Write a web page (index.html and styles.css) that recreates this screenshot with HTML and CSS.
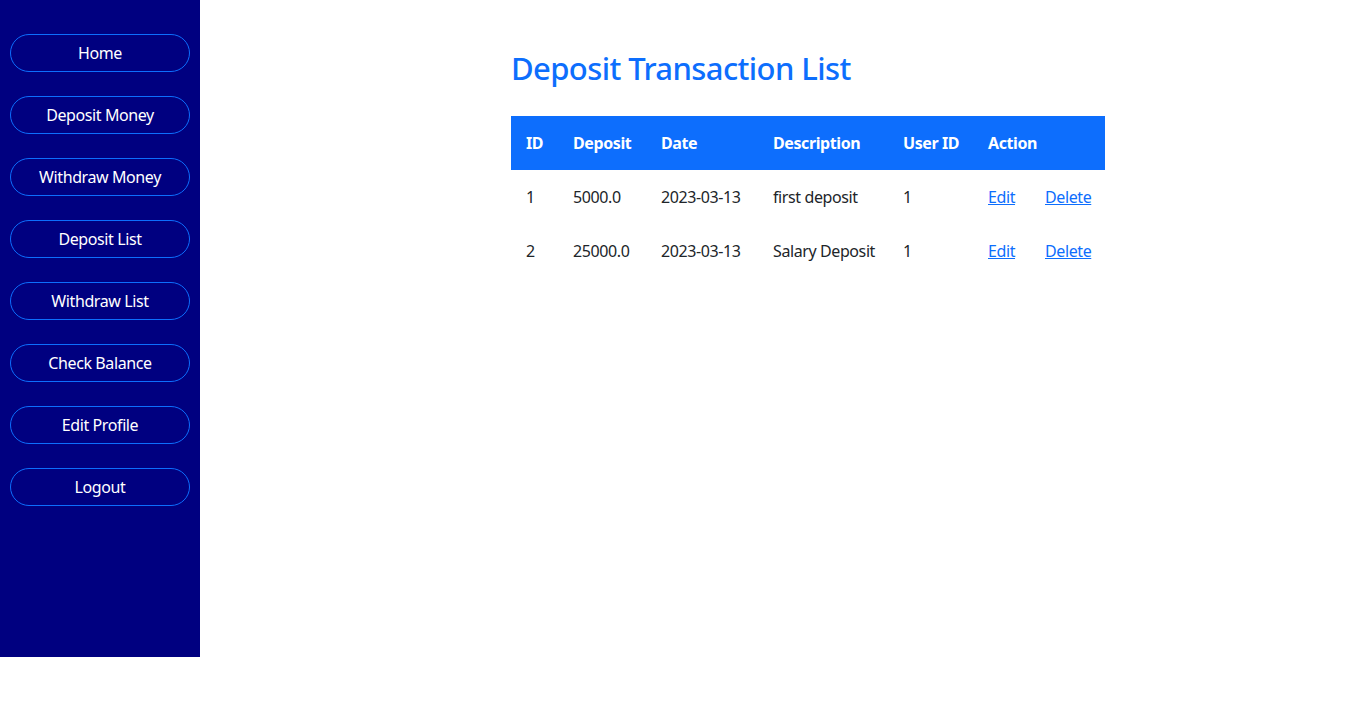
FILE: index.html
```html
<!DOCTYPE html>
<html lang="en">
<head>
<meta charset="utf-8">
<title>Deposit Transaction List</title>
<link rel="stylesheet" href="styles.css">
</head>
<body>
<div class="layout">
  <nav class="sidebar">
    <a class="nav-btn" href="#">Home</a>
    <a class="nav-btn" href="#">Deposit Money</a>
    <a class="nav-btn" href="#">Withdraw Money</a>
    <a class="nav-btn" href="#">Deposit List</a>
    <a class="nav-btn" href="#">Withdraw List</a>
    <a class="nav-btn" href="#">Check Balance</a>
    <a class="nav-btn" href="#">Edit Profile</a>
    <a class="nav-btn" href="#">Logout</a>
  </nav>
  <main class="main">
    <h2 class="title">Deposit Transaction List</h2>
    <table class="tx-table">
      <colgroup>
        <col class="c-id"><col class="c-dep"><col class="c-date"><col class="c-desc"><col class="c-user"><col class="c-edit"><col class="c-del">
      </colgroup>
      <thead>
        <tr><th>ID</th><th>Deposit</th><th>Date</th><th>Description</th><th>User ID</th><th colspan="2">Action</th></tr>
      </thead>
      <tbody>
        <tr><td>1</td><td>5000.0</td><td>2023-03-13</td><td>first deposit</td><td>1</td><td><a href="#">Edit</a></td><td><a href="#">Delete</a></td></tr>
        <tr><td>2</td><td>25000.0</td><td>2023-03-13</td><td>Salary Deposit</td><td>1</td><td><a href="#">Edit</a></td><td><a href="#">Delete</a></td></tr>
      </tbody>
    </table>
  </main>
</div>
</body>
</html>
```

FILE: styles.css
```css
* { box-sizing: border-box; }
html, body { margin: 0; padding: 0; }
body {
  font-family: "Noto Sans", "Open Sans", sans-serif;
  font-size: 16px;
  line-height: 1.5;
  letter-spacing: -0.4px;
  color: #212529;
  background: #fff;
}
.layout { display: flex; align-items: flex-start; }
.sidebar {
  width: 200px;
  height: 657px;
  flex: none;
  background: #000080;
  display: flex;
  flex-direction: column;
  gap: 24px;
  padding: 34px 10px 0;
}
.nav-btn {
  display: block;
  height: 38px;
  line-height: 36px;
  border: 1px solid #0d6efd;
  border-radius: 19px;
  color: #fff;
  text-decoration: none;
  text-align: center;
  font-size: 16px;
}
.main { padding: 50px 0 0 311px; }
.title {
  margin: 0 0 29px;
  font-size: 31px;
  font-weight: 500;
  line-height: 1.2;
  letter-spacing: -0.6px;
  color: #0d6efd;
}
.tx-table { border-collapse: collapse; table-layout: fixed; width: 594px; }
.c-id { width: 47px; }
.c-dep { width: 88px; }
.c-date { width: 112px; }
.c-desc { width: 130px; }
.c-user { width: 85px; }
.c-edit { width: 57px; }
.c-del { width: 75px; }
.tx-table th, .tx-table td {
  padding: 15px;
  text-align: left;
  white-space: nowrap;
  height: 54px;
}
.tx-table th { background: #0d6efd; color: #fff; font-weight: 700; }
.tx-table a { color: #0d6efd; text-decoration: underline; }
```
